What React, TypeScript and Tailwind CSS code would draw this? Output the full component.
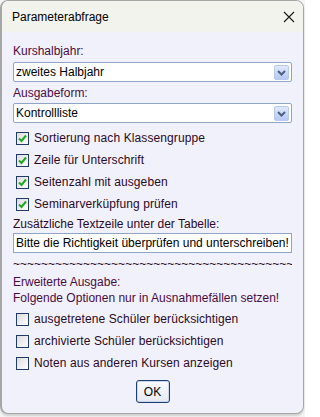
import React from "react";

const font = { fontFamily: '"Liberation Sans", Arial, sans-serif' };

function Chevron() {
  return (
    <div className="absolute right-[2px] top-[2px] w-[15px] h-[15px] rounded-[2px] border border-[#b9c9ef] bg-gradient-to-b from-[#e1e9fb] to-[#b6c8f2] flex items-center justify-center">
      <svg width="9" height="6" viewBox="0 0 9 6">
        <path d="M1 1 L4.5 4.5 L8 1" fill="none" stroke="#4d6185" strokeWidth="2" />
      </svg>
    </div>
  );
}

function Select({ value }: { value: string }) {
  return (
    <div className="relative h-[20px] border border-[#8fa5c5] rounded-[2px] bg-white flex items-center pl-[2px] text-[12px] text-black">
      {value}
      <Chevron />
    </div>
  );
}

function Check({ checked, label }: { checked: boolean; label: string }) {
  return (
    <div className="h-[22px] flex items-center pl-[3px]">
      <div className="w-[13px] h-[13px] border border-[#1f3c66] bg-gradient-to-br from-[#dcdcdc] to-white flex items-center justify-center">
        {checked && (
          <svg width="9" height="9" viewBox="0 0 9 9">
            <path d="M1 4.5 L3.5 7 L8 1.5" fill="none" stroke="#21a821" strokeWidth="2" />
          </svg>
        )}
      </div>
      <span className="ml-[5px] text-[12px] text-[#2a0a26] tracking-[0.1px]">{label}</span>
    </div>
  );
}

export default function App() {
  return (
    <div className="w-[305px] h-[417px] bg-[#f4f4f4]" style={font}>
      <div className="w-[304px] h-[414px] rounded-[8px] border border-[#a6a6a6] border-l-[2px] overflow-hidden bg-[#f1f1fc] flex flex-col shadow-[0_2px_2px_rgba(0,0,0,0.15)]">
        <div className="h-[31px] shrink-0 bg-[#f3f3ee] flex items-center justify-between pl-[10px] pr-[8px]">
          <span className="text-[12px] text-black">Parameterabfrage</span>
          <svg width="12" height="12" viewBox="0 0 12 12">
            <path d="M1 1 L11 11 M11 1 L1 11" stroke="#1a1a1a" strokeWidth="1.1" />
          </svg>
        </div>
        <div className="flex flex-col px-[11px] pt-[11px]">
          <div className="h-[16px] leading-[16px] text-[12px] text-[#4a0c40]">Kurshalbjahr:</div>
          <div className="mt-[3px]">
            <Select value="zweites Halbjahr" />
          </div>
          <div className="mt-[3px] h-[16px] leading-[16px] text-[12px] text-[#4a0c40]">Ausgabeform:</div>
          <div className="mt-[2px]">
            <Select value="Kontrollliste" />
          </div>
          <div className="mt-[4px] flex flex-col">
            <Check checked label="Sortierung nach Klassengruppe" />
            <Check checked label="Zeile für Unterschrift" />
            <Check checked label="Seitenzahl mit ausgeben" />
            <Check checked label="Seminarverküpfung prüfen" />
          </div>
          <div className="mt-[1px] h-[16px] leading-[16px] text-[12px] text-[#2a0a26]">Zusätzliche Textzeile unter der Tabelle:</div>
          <div className="mt-[1px] h-[20px] border border-[#8fa5c5] bg-white flex items-center pl-[2px] text-[12px] text-black whitespace-nowrap overflow-hidden">
            Bitte die Richtigkeit überprüfen und unterschreiben!
          </div>
          <div className="mt-[3px] h-[16px] leading-[16px] text-[12px] text-[#2a0a26] whitespace-nowrap overflow-hidden">
            ~~~~~~~~~~~~~~~~~~~~~~~~~~~~~~~~~~~~~~~~
          </div>
          <div className="mt-[2px] h-[16px] leading-[16px] text-[12px] text-[#4a0c40]">Erweiterte Ausgabe:</div>
          <div className="h-[16px] leading-[16px] text-[12px] text-[#4a0c40]">Folgende Optionen nur in Ausnahmefällen setzen!</div>
          <div className="mt-[2px] flex flex-col">
            <Check checked={false} label="ausgetretene Schüler berücksichtigen" />
            <Check checked={false} label="archivierte Schüler berücksichtigen" />
            <Check checked={false} label="Noten aus anderen Kursen anzeigen" />
          </div>
          <div className="mt-[6px] flex justify-center">
            <div className="w-[34px] h-[23px] rounded-[3px] border border-[#1e3f74] bg-gradient-to-b from-[#fbfbfd] to-[#e6e9f0] flex items-center justify-center text-[12px] text-black shadow-[inset_0_0_0_1px_#c9d5ee]">
              OK
            </div>
          </div>
        </div>
      </div>
    </div>
  );
}
